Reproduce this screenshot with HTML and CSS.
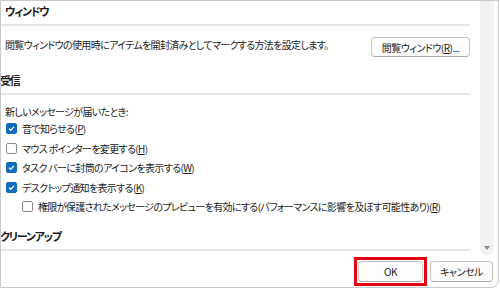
FILE: index.html
```html
<!DOCTYPE html>
<html lang="ja">
<head>
<meta charset="utf-8">
<link rel="stylesheet" href="styles.css">
</head>
<body>
<div class="window">
  <div class="main">
    <div class="content">
      <h2 class="heading first">ウィンドウ</h2>
      <div class="sep"></div>
      <div class="desc-row">
        <p class="desc">閲覧ウィンドウの使用時にアイテムを開封済みとしてマークする方法を設定します。</p>
        <button class="btn reading">閲覧ウィンドウ(<u>R</u>)...</button>
      </div>
      <h2 class="heading">受信</h2>
      <div class="sep"></div>
      <p class="label">新しいメッセージが届いたとき:</p>
      <div class="check"><span class="box on"><svg viewBox="0 0 12 12"><path d="M2.8 6.2 L5 8.3 L9.3 3.8" /></svg></span><span>音で知らせる(<u>P</u>)</span></div>
      <div class="check"><span class="box"></span><span>マウス ポインターを変更する(<u>H</u>)</span></div>
      <div class="check"><span class="box on"><svg viewBox="0 0 12 12"><path d="M2.8 6.2 L5 8.3 L9.3 3.8" /></svg></span><span>タスク バーに封筒のアイコンを表示する(<u>W</u>)</span></div>
      <div class="check"><span class="box on"><svg viewBox="0 0 12 12"><path d="M2.8 6.2 L5 8.3 L9.3 3.8" /></svg></span><span>デスクトップ通知を表示する(<u>K</u>)</span></div>
      <div class="check sub"><span class="box"></span><span>権限が保護されたメッセージのプレビューを有効にする(パフォーマンスに影響を及ぼす可能性あり)(<u>R</u>)</span></div>
      <h2 class="heading cleanup">クリーンアップ</h2>
      <div class="sep"></div>
    </div>
    <div class="scrollbar"><span class="arrow"></span></div>
  </div>
  <div class="footer">
    <span class="highlight"><button class="btn action ok">OK</button></span>
    <button class="btn action cancel">キャンセル</button>
  </div>
</div>
</body>
</html>
```

FILE: styles.css
```css
* { box-sizing: border-box; }
html, body { margin: 0; padding: 0; background: #ffffff; }
body {
  font-family: "Noto Sans CJK JP", "Noto Sans", sans-serif;
  font-size: 10px;
  letter-spacing: -0.65px;
  color: #1b1b1b;
  font-feature-settings: "palt";
  white-space: nowrap;
}
.window {
  width: 499px;
  height: 288px;
  border: 1px solid #c9c9c9;
  border-bottom-right-radius: 8px;
  display: flex;
  flex-direction: column;
  overflow: hidden;
}
.main {
  height: 254px;
  display: flex;
  overflow: hidden;
}
.content {
  flex: 1;
  min-width: 0;
  padding: 3px 10px 0 0;
}
.heading {
  margin: 0 0 0 -1px;
  font-size: 11px;
  letter-spacing: -1.2px;
  font-weight: bold;
  line-height: 14px;
  height: 14px;
}
.heading.first { margin-left: 4px; }
.sep {
  height: 2px;
  background: #e6e6e6;
  margin-top: 6px;
}
.desc-row {
  display: flex;
  justify-content: space-between;
  align-items: flex-start;
  margin: 11px 0 0 4px;
  height: 36px;
}
.desc {
  margin: 0;
  line-height: 14px;
  padding-top: 1px;
}
.btn {
  font-family: inherit;
  font-size: 10px;
  letter-spacing: -0.5px;
  font-feature-settings: "palt";
  color: #1b1b1b;
  background: #fdfdfd;
  border: 1px solid #c4c4c4;
  border-bottom-color: #a9a9a9;
  border-radius: 4px;
  padding: 0;
  height: 20px;
  line-height: 17px;
  white-space: nowrap;
}
.reading { width: 99px; flex: none; }
.label {
  margin: 10px 0 0 4px;
  line-height: 14px;
}
.check {
  display: flex;
  align-items: center;
  height: 19.5px;
  margin-left: 5px;
  gap: 5px;
}
.check.sub { margin-left: 21px; }
.box {
  width: 11px;
  height: 11px;
  border: 1px solid #8a8a8a;
  border-radius: 2px;
  background: #fff;
  display: inline-flex;
  flex: none;
}
.box.on {
  background: #0f6cbd;
  border-color: #0f6cbd;
}
.box svg {
  width: 9px;
  height: 9px;
  fill: none;
  stroke: #ffffff;
  stroke-width: 1.8;
}
u { text-underline-offset: 1px; }
.cleanup { margin-top: 12px; }
.scrollbar {
  width: 14px;
  flex: none;
  margin-right: 4px;
  background: #f2f2f2;
  border-bottom-left-radius: 6px;
  border-bottom-right-radius: 6px;
  position: relative;
}
.arrow {
  position: absolute;
  left: 4px;
  bottom: 5px;
  width: 0;
  height: 0;
  border-left: 3px solid transparent;
  border-right: 3px solid transparent;
  border-top: 4px solid #8a8a8a;
}
.footer {
  flex: 1;
  display: flex;
  justify-content: flex-end;
  align-items: flex-start;
  padding: 2px 5px 0 0;
}
.highlight {
  display: flex;
  border: 3px solid #e60012;
  padding: 1px;
  margin-right: 3px;
}
.action { height: 21px; }
.ok { width: 65px; }
.cancel { width: 63px; margin-top: 4px; }
```
